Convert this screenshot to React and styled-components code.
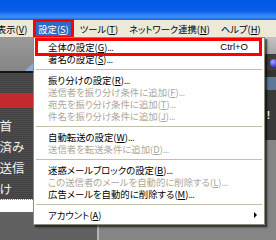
import styled, { createGlobalStyle } from "styled-components";

const GlobalStyle = createGlobalStyle`
  html, body {
    margin: 0;
    padding: 0;
    background: #8a8a8a;
  }
  body {
    width: 276px;
    height: 240px;
    overflow: hidden;
    font-family: "Noto Sans CJK JP", "Liberation Sans", sans-serif;
  }
`;

const Screen = styled.div`
  position: relative;
  width: 276px;
  height: 240px;
  overflow: hidden;
  display: flex;
  flex-direction: column;
`;

const TitleBar = styled.div`
  flex: none;
  height: 20px;
  background: linear-gradient(
    to bottom,
    #0058e6 0%,
    #0a5ce9 55%,
    #2b7ff2 72%,
    #3d8ff8 85%,
    #1b63e0 100%
  );
`;

const MenuBar = styled.div`
  flex: none;
  height: 17px;
  display: flex;
  align-items: center;
  background: #ece9d8;
  font-size: 9.3px;
  font-feature-settings: "palt";
  white-space: nowrap;

  & > :first-child {
    margin-left: -5px;
  }
`;

const BarItem = styled.div`
  height: 14px;
  line-height: 14px;
  padding: 0 2px;
  margin: 0 3.5px;
  color: ${(p) => (p.$active ? "#fff" : "#000")};
  background: ${(p) => (p.$active ? "#316ac5" : "transparent")};
  outline: ${(p) => (p.$marked ? "3px solid #f00" : "none")};
  outline-offset: 0;

  u {
    text-decoration: underline;
  }
`;

const Content = styled.div`
  flex: 1;
  display: flex;
  min-height: 0;
`;

const LeftPane = styled.div`
  flex: none;
  width: 97px;
  display: flex;
  flex-direction: column;
  border-right: 2px solid #b4b4b4;
  background-color: #676767;
  background-image: radial-gradient(#5a5a5a 0.6px, transparent 0.8px);
  background-size: 2px 2px;
`;

const PaneHeader = styled.div`
  flex: none;
  height: 36px;
  display: flex;
  align-items: flex-end;
  padding-left: 25px;
  box-sizing: border-box;
  background: linear-gradient(to bottom, #9a9a9a, #858585);
  border-bottom: 2px solid #151515;
`;

const FolderList = styled.div`
  flex: none;
  display: flex;
  flex-direction: column;
  background: repeating-linear-gradient(
    to bottom,
    #4c4c4c 0 1px,
    #424242 1px 2px
  );
`;

const Gap = styled.div`
  height: ${(p) => p.$h}px;
`;

const SelectedRow = styled.div`
  height: 15px;
  background: #c22a2d;
`;

const FolderRow = styled.div`
  height: 21px;
  line-height: 21px;
  font-size: 12.5px;
  color: #f2f2f2;
  text-indent: -13px;
  overflow: hidden;
  white-space: nowrap;
`;

const NewFolderRow = styled.div`
  flex: none;
  height: 12px;
  background: #fff;
  border-top: 1px dotted #8a8a8a;
`;

const MainPane = styled.div`
  flex: 1;
  display: flex;
  flex-direction: column;
`;

const ToolStrip = styled.div`
  flex: none;
  height: 17px;
  background: linear-gradient(to bottom, #c4c4c4, #a6a6a6);
  border-bottom: 1px solid #3a3a3a;
`;

const ButtonStrip = styled.div`
  flex: none;
  height: 15px;
  display: flex;
  align-items: center;
  justify-content: flex-end;
  background: #3d3d3d;
`;

const RoundButton = styled.div`
  width: 8px;
  height: 8px;
  margin-right: -2px;
  border-radius: 50%;
  background: radial-gradient(circle at 35% 35%, #a9a4ff, #4b45d8 60%, #26208e);
`;

const DarkBand = styled.div`
  flex: none;
  height: ${(p) => p.$h}px;
  background: ${(p) => p.$bg};
  display: flex;
  justify-content: flex-end;
  align-items: center;
`;

const Alert = styled.span`
  margin-right: 6px;
  font: bold 10px "Liberation Sans", sans-serif;
  color: #fff;
`;

const Desk = styled.div`
  flex: 1;
  background-color: #8c8c8c;
  background-image: radial-gradient(#7c7c7c 0.6px, transparent 0.8px);
  background-size: 2px 2px;
`;

const Menu = styled.div`
  position: absolute;
  left: 33px;
  top: 37px;
  width: 232px;
  box-sizing: border-box;
  padding: 3px 0;
  background: #fff;
  border: 1px solid #8f8c7e;
  box-shadow: 2px 2px 1px rgba(0, 0, 0, 0.45), 3px 3px 2px rgba(0, 0, 0, 0.2);
  font-size: 9.4px;
  font-feature-settings: "palt";
  white-space: nowrap;
`;

const Item = styled.div`
  height: 12px;
  line-height: 12px;
  margin: 0 5px 0 4px;
  padding: 0 11px 0 10px;
  display: flex;
  align-items: center;
  justify-content: space-between;
  color: ${(p) => (p.$disabled ? "#aca899" : "#000")};
  outline: ${(p) => (p.$marked ? "3px solid #f00" : "none")};
`;

const Dots = styled.span`
  letter-spacing: -0.6px;
`;

const Shortcut = styled.span`
  font-family: "Liberation Sans", sans-serif;
  font-size: 9.5px;
`;

const SubArrow = styled.span`
  width: 0;
  height: 0;
  margin-right: -9px;
  border-top: 3px solid transparent;
  border-bottom: 3px solid transparent;
  border-left: 3px solid #000;
`;

const Sep = styled.div`
  height: 1px;
  margin: 4px 2px;
  background: #c2bfae;
`;

const M = ({ c }) => (
  <>
    (<u>{c}</u>)
  </>
);

const menuRows = [
  { t: "全体の設定", k: "G", dots: true, sc: "Ctrl+O", marked: true },
  { t: "署名の設定", k: "S", dots: true },
  "sep",
  { t: "振り分けの設定", k: "R", dots: true },
  { t: "送信者を振り分け条件に追加", k: "F", dots: true, off: true },
  { t: "宛先を振り分け条件に追加", k: "T", dots: true, off: true },
  { t: "件名を振り分け条件に追加", k: "J", dots: true, off: true },
  "sep",
  { t: "自動転送の設定", k: "W", dots: true },
  { t: "送信者を転送条件に追加", k: "D", dots: true, off: true },
  "sep",
  { t: "迷惑メールブロックの設定", k: "B", dots: true },
  { t: "この送信者のメールを自動的に削除する", k: "L", dots: true, off: true },
  { t: "広告メールを自動的に削除する", k: "M", dots: true },
  "sep",
  { t: "アカウント", k: "A", sub: true },
];

const folders = ["部首", "返済み", "未送信", "分け"];

export default function App() {
  return (
    <>
      <GlobalStyle />
      <Screen>
        <TitleBar />
        <MenuBar>
          <BarItem>
            表示<M c="V" />
          </BarItem>
          <BarItem $active $marked>
            設定<M c="S" />
          </BarItem>
          <BarItem>
            ツール<M c="T" />
          </BarItem>
          <BarItem>
            ネットワーク連携<M c="N" />
          </BarItem>
          <BarItem>
            ヘルプ<M c="H" />
          </BarItem>
        </MenuBar>

        <Content>
          <LeftPane>
            <PaneHeader>
              <svg width="9" height="9" viewBox="0 0 9 9">
                <polygon points="0,9 9,0 9,9" fill="#8fa8d4" />
              </svg>
            </PaneHeader>
            <FolderList>
              <Gap $h={20} />
              <SelectedRow />
              <Gap $h={7} />
              {folders.map((f) => (
                <FolderRow key={f}>{f}</FolderRow>
              ))}
            </FolderList>
            <NewFolderRow />
          </LeftPane>

          <MainPane>
            <ToolStrip />
            <ButtonStrip>
              <RoundButton />
            </ButtonStrip>
            <DarkBand $h={7} $bg="#333" />
            <DarkBand $h={13} $bg="#5d7796" />
            <DarkBand $h={50} $bg="#3a3a3a">
              <Alert>!</Alert>
            </DarkBand>
            <Desk />
          </MainPane>
        </Content>

        <Menu>
          {menuRows.map((r, i) =>
            r === "sep" ? (
              <Sep key={i} />
            ) : (
              <Item key={i} $disabled={r.off} $marked={r.marked}>
                <span>
                  {r.t}
                  <M c={r.k} />
                  {r.dots && <Dots>...</Dots>}
                </span>
                {r.sc && <Shortcut>{r.sc}</Shortcut>}
                {r.sub && <SubArrow />}
              </Item>
            )
          )}
        </Menu>
      </Screen>
    </>
  );
}
